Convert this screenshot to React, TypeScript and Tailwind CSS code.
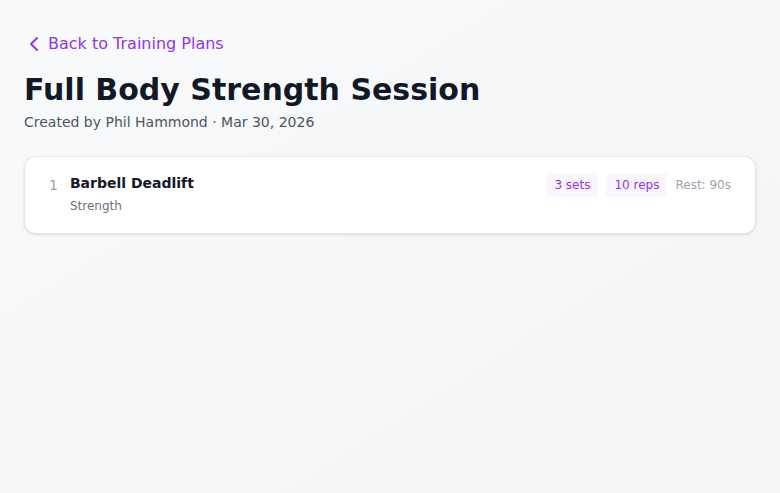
import React from "react";

const exercises = [
  { id: 1, name: "Barbell Deadlift", category: "Strength", sets: 3, reps: 10, rest: 90 },
];

export default function App() {
  return (
    <div
      className="min-h-screen bg-gradient-to-br from-[#f9fafb] to-[#f3f4f6] px-6 pt-8"
      style={{ fontFamily: '"DejaVu Sans", sans-serif' }}
    >
      <a href="#" className="flex items-center gap-2 text-base text-[#9333ea] w-fit">
        <svg className="ml-1" width="12" height="16" viewBox="0 0 12 16" fill="none" stroke="currentColor" strokeWidth="2" strokeLinecap="round" strokeLinejoin="round">
          <path d="M9 2L3 8l6 6" />
        </svg>
        Back to Training Plans
      </a>

      <h1 className="mt-4 text-3xl font-bold text-[#111827]">Full Body Strength Session</h1>
      <p className="mt-1 text-sm text-[#4b5563]">Created by Phil Hammond · Mar 30, 2026</p>

      <div className="mt-6 space-y-3">
        {exercises.map((ex) => (
          <div
            key={ex.id}
            className="flex items-start justify-between rounded-xl border border-[#e5e7eb] bg-white px-6 pt-4 pb-[19px] shadow-sm"
          >
            <div className="flex items-start gap-3">
              <span className="text-sm leading-5 text-[#9ca3af] pt-0.5">{ex.id}</span>
              <div>
                <div className="text-sm font-bold text-[#111827]">{ex.name}</div>
                <div className="mt-[5px] text-xs text-[#6b7280]">{ex.category}</div>
              </div>
            </div>
            <div className="flex items-center gap-2 text-xs">
              <span className="rounded bg-[#faf5ff] px-2 py-1 text-[#9333ea]">{ex.sets} sets</span>
              <span className="rounded bg-[#faf5ff] px-2 py-1 text-[#9333ea]">{ex.reps} reps</span>
              <span className="text-[#9ca3af]">Rest: {ex.rest}s</span>
            </div>
          </div>
        ))}
      </div>
    </div>
  );
}
